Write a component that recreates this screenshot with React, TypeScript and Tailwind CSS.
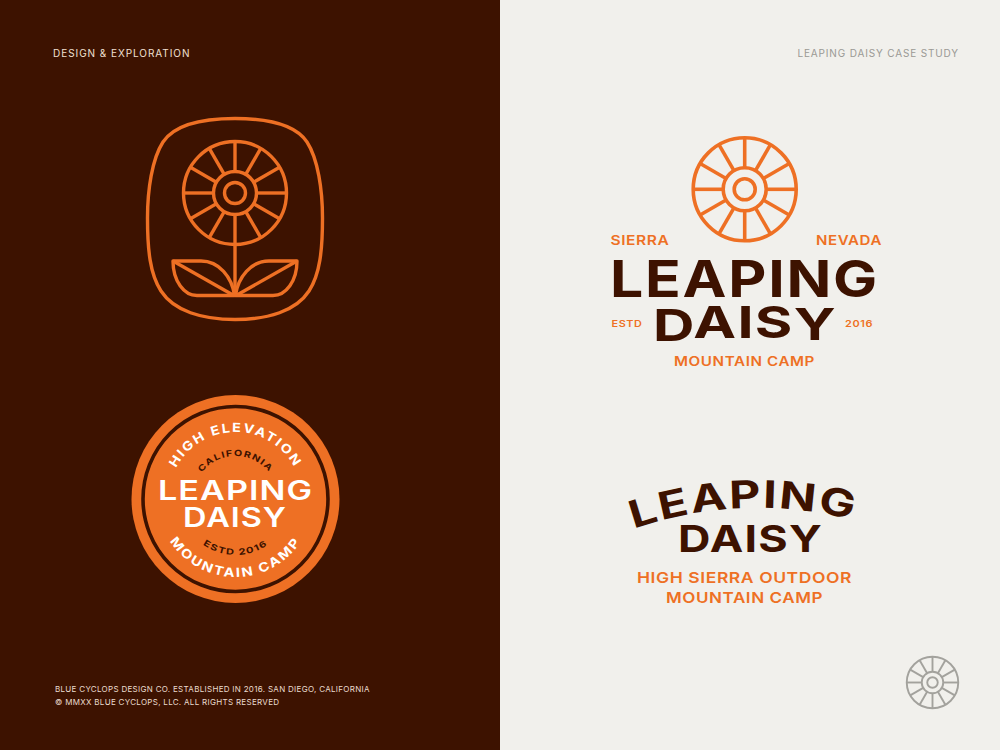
const ORANGE = "#ee7024";
const BROWN = "#3d1200";
const SANS = "Inter, 'Liberation Sans', sans-serif";

// 12 spoke wheel shared by all three logo marks
const Wheel = ({ cx, cy, stroke, width }: { cx: number; cy: number; stroke: string; width: number }) => {
  const spokes = Array.from({ length: 12 }, (_, i) => (i * Math.PI) / 6);
  return (
    <g fill="none" stroke={stroke} strokeWidth={width}>
      <circle cx={cx} cy={cy} r={51.5} />
      <circle cx={cx} cy={cy} r={21.5} />
      <circle cx={cx} cy={cy} r={10.5} />
      {spokes.map((a) => (
        <line
          key={a}
          x1={cx + Math.cos(a) * 21.5}
          y1={cy + Math.sin(a) * 21.5}
          x2={cx + Math.cos(a) * 51.5}
          y2={cy + Math.sin(a) * 51.5}
        />
      ))}
    </g>
  );
};

// stretched logo lettering, width taken from the reference
const Word = ({
  x,
  y,
  w,
  size,
  fill,
  weight = 600,
  dy,
  gap = 0,
  children,
}: {
  x: number;
  y: number;
  w: number;
  size: number;
  fill: string;
  weight?: number;
  dy?: string;
  gap?: number;
  children: string;
}) => (
  <text
    x={x}
    y={y}
    dy={dy}
    textLength={w}
    lengthAdjust="spacingAndGlyphs"
    letterSpacing={gap}
    fontSize={size}
    fontWeight={weight}
    fill={fill}
    fontFamily={SANS}
  >
    {children}
  </text>
);

const Arc = ({
  href,
  size,
  fill,
  length,
  weight = 600,
  gap = 0,
  children,
}: {
  href: string;
  size: number;
  fill: string;
  length: number;
  weight?: number;
  gap?: number;
  children: string;
}) => (
  <text fontSize={size} fontWeight={weight} letterSpacing={gap} fill={fill} fontFamily={SANS} textAnchor="middle">
    <textPath href={href} startOffset="50%" textLength={length} lengthAdjust="spacingAndGlyphs">
      {children}
    </textPath>
  </text>
);

const Flower = () => (
  <svg viewBox="140 110 190 216" width={190} height={216} className="block">
    <g fill="none" stroke={ORANGE} strokeWidth={3.4} strokeLinejoin="round">
      <path d="M235 118.5C268 118.5 295 124 307 142C318 159 322.5 190 322.5 218C322.5 250 320 274 309 291C296 311 268 319.5 235 319.5C202 319.5 174 311 161 291C150 274 147.5 250 147.5 218C147.5 190 152 159 163 142C175 124 202 118.5 235 118.5Z" />
      <line x1={235} y1={245} x2={235} y2={296} />
      <path d="M173 261H201C219 261 232 277 234.5 295.5H197C184 295.5 173 281 173 261Z" />
      <path d="M297 261H269C251 261 238 277 235.5 295.5H273C286 295.5 297 281 297 261Z" />
      <line x1={173} y1={261} x2={233} y2={295} />
      <line x1={297} y1={261} x2={237} y2={295} />
    </g>
    <Wheel cx={235} cy={193} stroke={ORANGE} width={3.4} />
  </svg>
);

const Badge = () => (
  <svg viewBox="125 390 220 220" width={220} height={220} className="block">
    <defs>
      <path id="badgeTop" d="M168.5 499A67 67 0 0 1 302.5 499" />
      <path id="badgeCal" d="M192.5 499A43 43 0 0 1 278.5 499" />
      <path id="badgeBottom" d="M157.5 499A78 78 0 0 0 313.5 499" />
      <path id="badgeEstd" d="M179.5 499A56 56 0 0 0 291.5 499" />
    </defs>
    <circle cx={235.5} cy={499} r={104} fill={ORANGE} />
    <circle cx={235.5} cy={499} r={92.5} fill="none" stroke={BROWN} strokeWidth={3.6} />
    <Arc href="#badgeTop" size={12.5} fill="#fff" length={146} weight={700} gap={1.6}>HIGH ELEVATION</Arc>
    <Arc href="#badgeCal" size={8.5} fill={BROWN} length={78} weight={700} gap={1}>CALIFORNIA</Arc>
    <Arc href="#badgeBottom" size={12.5} fill="#fff" length={156} weight={700} gap={1.6}>MOUNTAIN CAMP</Arc>
    <Arc href="#badgeEstd" size={8.5} fill={BROWN} length={70} weight={700} gap={1}>ESTD 2016</Arc>
    <Word x={158} y={500} w={155} size={26.5} fill="#fff" gap={0.8}>LEAPING</Word>
    <Word x={183} y={527} w={104} size={26.5} fill="#fff" gap={0.8}>DAISY</Word>
  </svg>
);

const Lockup = () => (
  <svg viewBox="600 130 290 240" width={290} height={240} className="block">
    <Wheel cx={744.7} cy={189.3} stroke={ORANGE} width={3.6} />
    <Word x={610.5} y={245} w={59} size={13} fill={ORANGE} gap={0.5}>SIERRA</Word>
    <Word x={816} y={245} w={66} size={13} fill={ORANGE} gap={0.5}>NEVADA</Word>
    <Word x={610} y={297} w={269} size={50.5} fill={BROWN} weight={700} gap={1.5}>LEAPING</Word>
    <Word x={653} y={340.5} dy="0 -3 0 0 2" w={184} size={44} fill={BROWN} weight={700} gap={1}>DAISY</Word>
    <Word x={611.5} y={327} w={31} size={9} fill={ORANGE} gap={0.5}>ESTD</Word>
    <Word x={845} y={327} w={28} size={9} fill={ORANGE} gap={0.5}>2016</Word>
    <Word x={674} y={366} w={141} size={12.5} fill={ORANGE} gap={0.5}>MOUNTAIN CAMP</Word>
  </svg>
);

const Wordmark = () => (
  <svg viewBox="615 460 260 150" width={260} height={150} className="block">
    <defs>
      <path id="markArc" d="M620 534A380 380 0 0 1 868 524" />
    </defs>
    <Arc href="#markArc" size={38} fill={BROWN} length={224} weight={700} gap={1.5}>LEAPING</Arc>
    <Word x={678} y={552} w={145} size={37} fill={BROWN} weight={700} gap={1}>DAISY</Word>
    <Word x={637} y={583} w={215} size={15} fill={ORANGE} gap={0.5}>HIGH SIERRA OUTDOOR</Word>
    <Word x={666} y={603} w={157} size={15} fill={ORANGE} gap={0.5}>MOUNTAIN CAMP</Word>
  </svg>
);

const SmallWheel = () => (
  <svg viewBox="-55 -55 110 110" width={55} height={55} className="block">
    <Wheel cx={0} cy={0} stroke="#a3a29d" width={3.8} />
  </svg>
);

export default function App() {
  return (
    <div className="flex w-[1000px] h-[750px] overflow-hidden font-['Inter',sans-serif]">
      <div className="flex flex-col w-[500px] h-full bg-[#3d1200] pl-[53px]">
        <p className="mt-[47px] text-[10px] leading-[12px] tracking-[0.95px] text-[#f1e0d2]">
          DESIGN &amp; EXPLORATION
        </p>
        <div className="mt-[51px] ml-[87px]">
          <Flower />
        </div>
        <div className="mt-[64px] ml-[72px]">
          <Badge />
        </div>
        <div className="mt-[73px] ml-[2px] text-[8px] leading-[13px] tracking-[0.3px] text-[#eadccf]">
          <p>BLUE CYCLOPS DESIGN CO. ESTABLISHED IN 2016. SAN DIEGO, CALIFORNIA</p>
          <p>© MMXX BLUE CYCLOPS, LLC. ALL RIGHTS RESERVED</p>
        </div>
      </div>
      <div className="flex flex-col w-[500px] h-full bg-[#f1f0ec]">
        <p className="mt-[47px] mr-[41px] self-end text-[10px] leading-[12px] tracking-[0.85px] text-[#9a9994]">
          LEAPING DAISY CASE STUDY
        </p>
        <div className="mt-[71px] ml-[100px]">
          <Lockup />
        </div>
        <div className="mt-[90px] ml-[115px]">
          <Wordmark />
        </div>
        <div className="mt-[45px] ml-[405px]">
          <SmallWheel />
        </div>
      </div>
    </div>
  );
}
